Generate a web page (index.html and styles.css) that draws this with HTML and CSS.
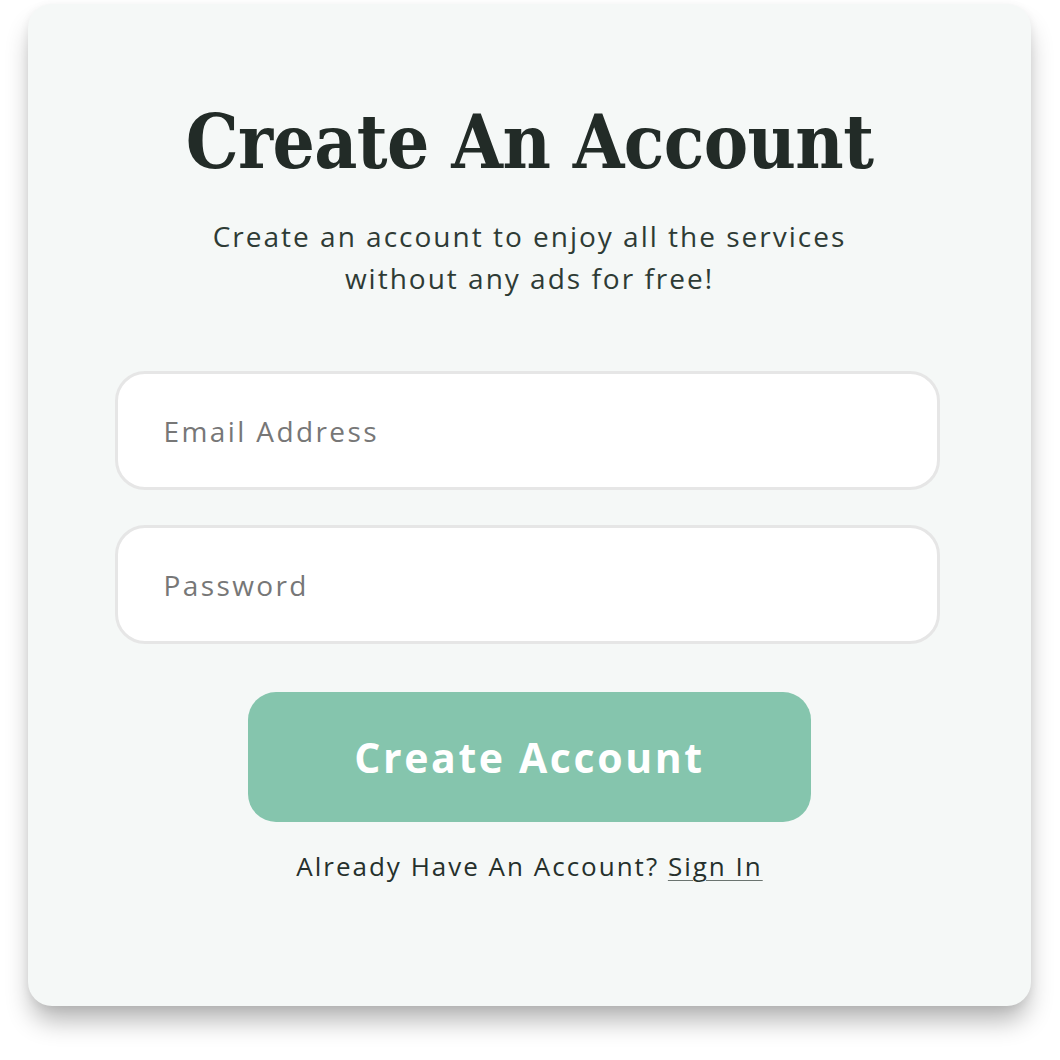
FILE: index.html
```html
<!DOCTYPE html>
<html>
<head>
<meta charset="utf-8">
<link rel="stylesheet" href="styles.css">
</head>
<body>
<div class="page">
  <div class="card">
    <h1 class="title">Create An Account</h1>
    <p class="subtitle">Create an account to enjoy all the services<br>without any ads for free!</p>
    <form class="form">
      <input class="field" type="email" placeholder="Email Address">
      <input class="field" type="password" placeholder="Password">
      <button class="btn" type="button">Create Account</button>
    </form>
    <p class="footer">Already Have An Account? <a class="link" href="#">Sign In</a></p>
  </div>
</div>
</body>
</html>
```

FILE: styles.css
```css
html, body {
  margin: 0;
  padding: 0;
  background: #ffffff;
}
.page {
  padding: 4px 0 54px 28px;
}
.card {
  box-sizing: border-box;
  width: 1003px;
  height: 1002px;
  background: #f5f8f7;
  border-radius: 24px;
  box-shadow: 0 18px 26px -4px rgba(0, 0, 0, 0.3), 0 2px 10px rgba(0, 0, 0, 0.06);
  padding-top: 101px;
  display: flex;
  flex-direction: column;
  align-items: center;
  font-family: "Open Sans", "Liberation Sans", sans-serif;
}
.title {
  margin: 0;
  font-family: "DejaVu Serif Condensed", "DejaVu Serif", serif;
  font-stretch: condensed;
  font-weight: bold;
  font-size: 74px;
  line-height: 74px;
  color: #222b27;
  letter-spacing: -0.6px;
}
.subtitle {
  margin: 36px 0 0;
  font-size: 28px;
  line-height: 42px;
  text-align: center;
  color: #2e3b35;
  letter-spacing: 2px;
}
.form {
  margin-top: 72px;
  display: flex;
  flex-direction: column;
  align-items: center;
  gap: 35px;
}
.field {
  box-sizing: border-box;
  width: 825px;
  height: 119px;
  margin-right: 5px;
  border: 3px solid #e6e6e6;
  border-radius: 30px;
  background: #ffffff;
  padding: 0 0 0 46px;
  font-family: "Open Sans", "Liberation Sans", sans-serif;
  font-size: 28px;
  letter-spacing: 2.4px;
  color: #333;
  outline: none;
}
.field::placeholder {
  color: #777777;
}
.btn {
  margin-top: 13px;
  width: 563px;
  height: 130px;
  border: none;
  border-radius: 28px;
  background: #85c5ad;
  color: #ffffff;
  font-family: "Open Sans", "Liberation Sans", sans-serif;
  font-weight: bold;
  font-size: 41px;
  letter-spacing: 2.6px;
  cursor: pointer;
}
.footer {
  margin: 28px 0 0;
  font-size: 26px;
  line-height: 32px;
  color: #26302c;
  letter-spacing: 2px;
}
.link {
  color: #26302c;
  text-decoration: underline;
  text-decoration-color: #6b7470;
  text-decoration-thickness: 1px;
  text-underline-offset: 4px;
}
```
